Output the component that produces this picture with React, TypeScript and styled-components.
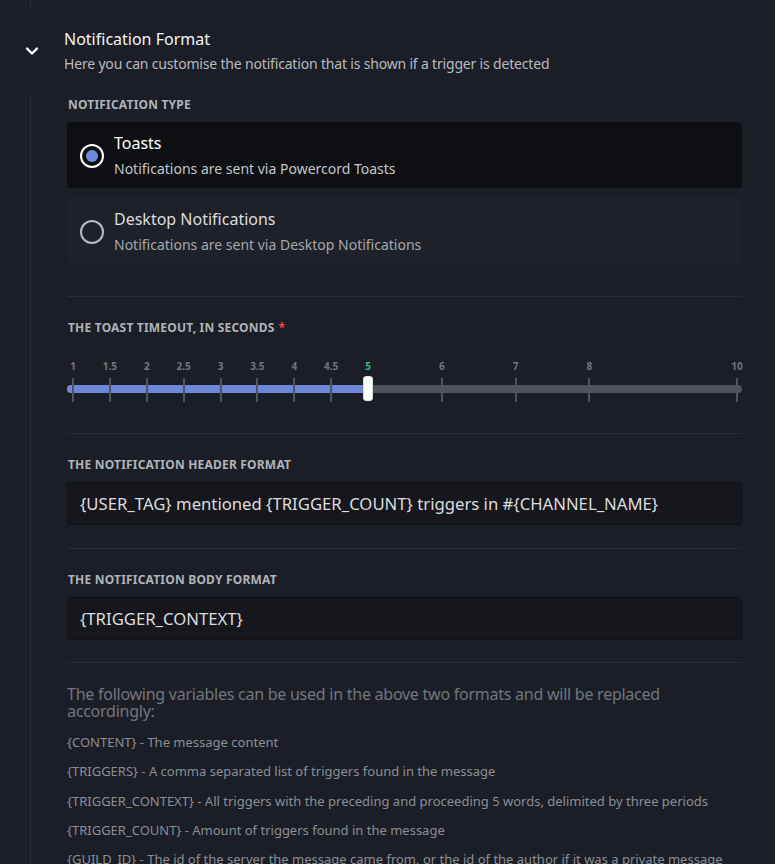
import React from "react";
import styled, { createGlobalStyle } from "styled-components";

const Global = createGlobalStyle`
  html, body { margin: 0; padding: 0; background: #1b1e26; }
  body { font-family: "Noto Sans", "Open Sans", sans-serif; overflow: hidden; }
  * { box-sizing: border-box; }
`;

const Page = styled.div`
  width: 775px;
  height: 864px;
  background: #1b1e26;
  overflow: hidden;
`;

const Stub = styled.div`
  margin-left: 30px;
  height: 10px;
  border-left: 1px solid #2c2f37;
`;

const Header = styled.div`
  display: flex;
  align-items: flex-start;
  padding: 19px 0 0 24px;
  height: 86px;
`;

const Chevron = styled.div`
  width: 16px;
  height: 16px;
  margin-top: 14px;
  margin-right: 24px;
  display: flex;
  align-items: center;
  justify-content: center;
`;

const HeaderText = styled.div`
  display: flex;
  flex-direction: column;
`;

const Title = styled.div`
  color: #f3f4f5;
  font-size: 16px;
  line-height: 20px;
`;

const Subtitle = styled.div`
  color: #b9bbbe;
  font-size: 14px;
  line-height: 18px;
  margin-top: 6px;
  letter-spacing: -0.18px;
`;

const Body = styled.div`
  margin-left: 30px;
  border-left: 1px solid #2c2f37;
  padding: 1px 33px 0 36px;
`;

const Label = styled.div`
  color: #b0b3b8;
  font-size: 12px;
  line-height: 16px;
  font-weight: 700;
  letter-spacing: 0.2px;
  text-transform: uppercase;
  margin-bottom: 9px;
  padding-left: 1px;
`;

const Required = styled.span`
  color: #ed4245;
  margin-left: 4px;
`;

const RadioGroup = styled.div`
  display: flex;
  flex-direction: column;
  gap: 10px;
`;

const RadioCard = styled.div<{ $selected?: boolean }>`
  display: flex;
  align-items: center;
  background: ${(p) => (p.$selected ? "#0e0f13" : "#1e2129")};
  border-radius: 3px;
  padding: 11px 13px 10px;
`;

const RadioCircle = styled.div<{ $selected?: boolean }>`
  width: 24px;
  height: 24px;
  border-radius: 50%;
  border: 2px solid ${(p) => (p.$selected ? "#ffffff" : "#b9bbbe")};
  display: flex;
  align-items: center;
  justify-content: center;
  margin-right: 10px;
  flex-shrink: 0;
`;

const RadioDot = styled.div`
  width: 12px;
  height: 12px;
  border-radius: 50%;
  background: #7289da;
`;

const RadioText = styled.div`
  display: flex;
  flex-direction: column;
`;

const RadioTitle = styled.div<{ $selected?: boolean }>`
  color: ${(p) => (p.$selected ? "#ffffff" : "#dcddde")};
  font-size: 16px;
  line-height: 20px;
`;

const RadioSub = styled.div<{ $selected?: boolean }>`
  color: ${(p) => (p.$selected ? "#c4c6c9" : "#a5a8ac")};
  font-size: 14px;
  line-height: 18px;
  margin-top: 7px;
`;

const Divider = styled.div<{ $top: number }>`
  height: 1px;
  background: #2a2d35;
  margin-top: ${(p) => p.$top}px;
  margin-bottom: 23px;
`;

const SliderWrap = styled.div`
  position: relative;
  height: 52px;
  margin-top: 20px;
`;

const Track = styled.div`
  position: absolute;
  left: 0;
  right: 0;
  top: 29px;
  height: 8px;
  border-radius: 4px;
  background: #4f545c;
`;

const Fill = styled.div`
  position: absolute;
  left: 0;
  top: 0;
  bottom: 0;
  border-radius: 4px 0 0 4px;
  background: #6f87d8;
`;

const Mark = styled.div`
  position: absolute;
  top: 0;
  width: 0;
  display: flex;
  flex-direction: column;
  align-items: center;
`;

const MarkLabel = styled.div<{ $active?: boolean }>`
  font-size: 10px;
  line-height: 12px;
  font-weight: 700;
  color: ${(p) => (p.$active ? "#43b581" : "#72767d")};
  white-space: nowrap;
  margin-top: 4px;
`;

const Tick = styled.div`
  width: 2px;
  height: 24px;
  margin-top: 6px;
  background: #4f545c;
`;

const Grabber = styled.div`
  position: absolute;
  top: 20px;
  width: 10px;
  height: 25px;
  margin-left: -5px;
  border-radius: 3px;
  background: #ffffff;
  border: 1px solid #dcddde;
  box-shadow: 0 3px 1px 0 rgba(0, 0, 0, 0.1);
`;

const Input = styled.div`
  height: 43px;
  background: #15171c;
  border: 1px solid #101114;
  border-radius: 3px;
  padding: 0 12px;
  display: flex;
  align-items: center;
  color: #dcddde;
  font-size: 16.7px;
`;

const Description = styled.div`
  color: #72767d;
  font-size: 16px;
  line-height: 17px;
  letter-spacing: -0.25px;
  margin-top: 23px;
`;

const VarList = styled.div`
  display: flex;
  flex-direction: column;
  gap: 11px;
  margin-top: 13px;
`;

const VarItem = styled.div`
  color: #8b8f95;
  font-size: 13px;
  line-height: 18.3px;
`;

const marks = [1, 1.5, 2, 2.5, 3, 3.5, 4, 4.5, 5, 6, 7, 8, 10];
const pct = (v: number) => (v - 1) / 9;

const vars = [
  "{CONTENT} - The message content",
  "{TRIGGERS} - A comma separated list of triggers found in the message",
  "{TRIGGER_CONTEXT} - All triggers with the preceding and proceeding 5 words, delimited by three periods",
  "{TRIGGER_COUNT} - Amount of triggers found in the message",
  "{GUILD_ID} - The id of the server the message came from, or the id of the author if it was a private message",
];

export default function App() {
  const value = 5;
  const pos = (v: number) => `calc(6px + ${pct(v)} * (100% - 11px))`;
  return (
    <Page>
      <Global />
      <Stub />
      <Header>
        <Chevron>
          <svg width="16" height="16" viewBox="0 0 16 16">
            <path d="M3 5.5 L8 10.5 L13 5.5" fill="none" stroke="#fff" strokeWidth="2.4" strokeLinecap="round" strokeLinejoin="round" />
          </svg>
        </Chevron>
        <HeaderText>
          <Title>Notification Format</Title>
          <Subtitle>Here you can customise the notification that is shown if a trigger is detected</Subtitle>
        </HeaderText>
      </Header>
      <Body>
        <Label>Notification Type</Label>
        <RadioGroup>
          <RadioCard $selected>
            <RadioCircle $selected>
              <RadioDot />
            </RadioCircle>
            <RadioText>
              <RadioTitle $selected>Toasts</RadioTitle>
              <RadioSub $selected>Notifications are sent via Powercord Toasts</RadioSub>
            </RadioText>
          </RadioCard>
          <RadioCard>
            <RadioCircle />
            <RadioText>
              <RadioTitle>Desktop Notifications</RadioTitle>
              <RadioSub>Notifications are sent via Desktop Notifications</RadioSub>
            </RadioText>
          </RadioCard>
        </RadioGroup>
        <Divider $top={32} />
        <Label>
          The toast timeout, in seconds<Required>*</Required>
        </Label>
        <SliderWrap>
          <Track>
            <Fill style={{ width: pos(value) }} />
          </Track>
          {marks.map((m) => (
            <Mark key={m} style={{ left: pos(m) }}>
              <MarkLabel $active={m === value}>{m}</MarkLabel>
              <Tick />
            </Mark>
          ))}
          <Grabber style={{ left: pos(value) }} />
        </SliderWrap>
        <Divider $top={25} />
        <Label>The notification header format</Label>
        <Input>{"{USER_TAG} mentioned {TRIGGER_COUNT} triggers in #{CHANNEL_NAME}"}</Input>
        <Divider $top={23} />
        <Label>The notification body format</Label>
        <Input>{"{TRIGGER_CONTEXT}"}</Input>
        <Divider $top={22} />
        <Description>
          The following variables can be used in the above two formats and will be replaced accordingly:
        </Description>
        <VarList>
          {vars.map((v) => (
            <VarItem key={v}>{v}</VarItem>
          ))}
        </VarList>
      </Body>
    </Page>
  );
}
